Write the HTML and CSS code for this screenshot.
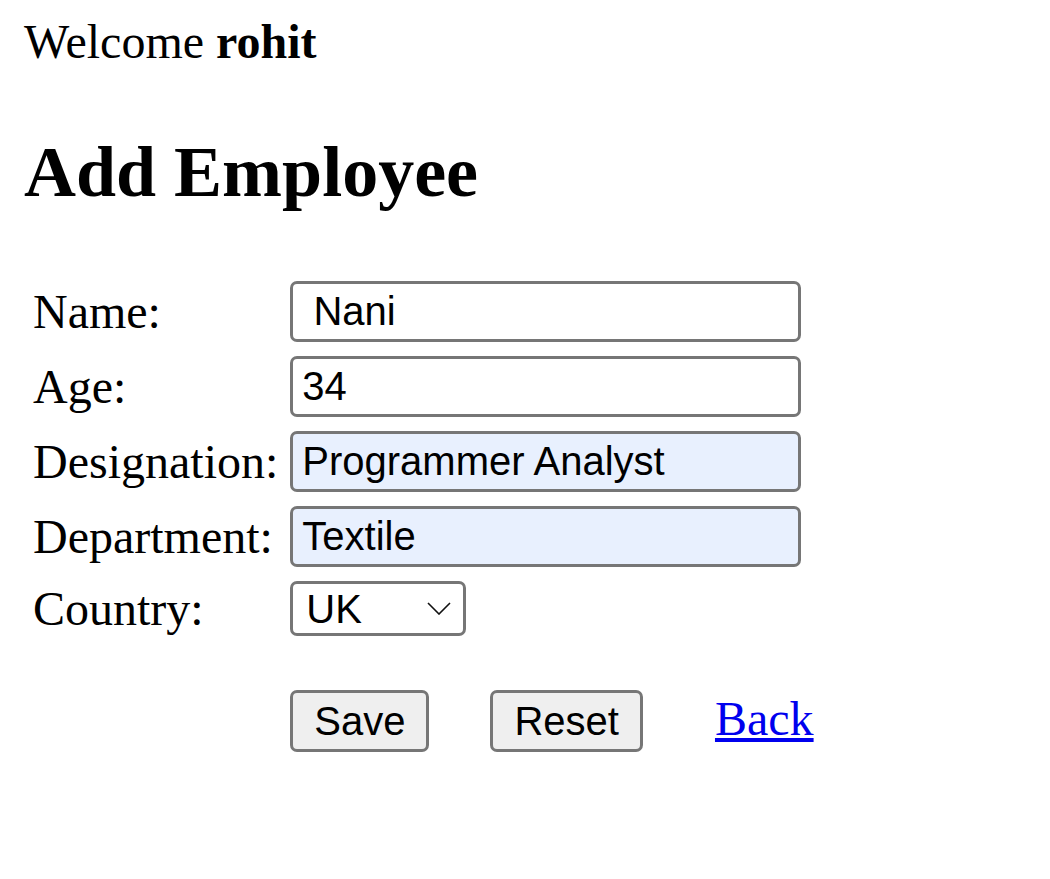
FILE: index.html
```html
<!DOCTYPE html>
<html>
<head>
<meta charset="utf-8">
<title>Add Employee</title>
<link rel="stylesheet" href="styles.css">
</head>
<body>
<div class="welcome">Welcome <b>rohit</b></div>
<h2 class="title">Add Employee</h2>
<table class="form">
  <tr>
    <td class="label">Name:</td>
    <td class="field"><input class="text" type="text" value=" Nani"></td>
  </tr>
  <tr>
    <td class="label">Age:</td>
    <td class="field"><input class="text" type="text" value="34"></td>
  </tr>
  <tr>
    <td class="label">Designation:</td>
    <td class="field"><input class="text autofill" type="text" value="Programmer Analyst"></td>
  </tr>
  <tr>
    <td class="label">Department:</td>
    <td class="field"><input class="text autofill" type="text" value="Textile"></td>
  </tr>
  <tr>
    <td class="label">Country:</td>
    <td class="field">
      <span class="select-wrap">
        <select class="select">
          <option>UK</option>
          <option>India</option>
          <option>USA</option>
        </select>
        <svg class="chevron" width="24" height="13" viewBox="0 0 24 13" aria-hidden="true">
          <path d="M1 1 L12 12 L23 1" fill="none" stroke="#111" stroke-width="1.6"/>
        </svg>
      </span>
    </td>
  </tr>
  <tr>
    <td class="label"></td>
    <td class="field actions-cell">
      <div class="actions">
        <button class="btn" type="submit">Save</button>
        <button class="btn btn-reset" type="reset">Reset</button>
        <a class="back" href="#">Back</a>
      </div>
    </td>
  </tr>
</table>
</body>
</html>
```
FILE: styles.css
```css
html, body {
  background: #ffffff;
}
body {
  margin: 0;
  padding: 14px 24px 0;
  font-family: "Liberation Serif", "Times New Roman", serif;
  font-size: 48px;
  color: #000;
}
.welcome {
  line-height: normal;
}
.title {
  font-size: 72px;
  font-weight: bold;
  margin: 62px 0 57px;
  line-height: normal;
}
.form {
  border-spacing: 6px;
  border-collapse: separate;
}
.form td {
  padding: 4px 3px;
  vertical-align: middle;
}
.label {
  white-space: nowrap;
  line-height: normal;
}
.text {
  display: block;
  box-sizing: border-box;
  width: 511px;
  height: 61px;
  margin: 0;
  padding: 0 9px;
  border: 3px solid #767676;
  border-radius: 7px;
  background: #ffffff;
  font-family: "Liberation Sans", Arial, sans-serif;
  font-size: 40px;
  color: #000;
  outline: none;
}
.autofill {
  background: #e8f0fe;
}
.select-wrap {
  position: relative;
  display: block;
  width: 176px;
}
.select {
  display: block;
  -webkit-appearance: none;
  appearance: none;
  box-sizing: border-box;
  width: 176px;
  height: 55px;
  margin: 0;
  padding: 0 0 0 13px;
  border: 3px solid #767676;
  border-radius: 7px;
  background: #ffffff;
  font-family: "Liberation Sans", Arial, sans-serif;
  font-size: 40px;
  color: #000;
}
.chevron {
  position: absolute;
  left: 137px;
  top: 21px;
  pointer-events: none;
}
.actions-cell {
  padding-top: 44px !important;
}
.actions {
  display: flex;
  align-items: baseline;
}
.btn {
  box-sizing: border-box;
  height: 62px;
  margin: 0;
  padding: 0 21px;
  border: 3px solid #767676;
  border-radius: 7px;
  background: #efefef;
  font-family: "Liberation Sans", Arial, sans-serif;
  font-size: 40px;
  color: #000;
}
.btn-reset {
  margin-left: 61px;
}
.back {
  margin-left: 72px;
  color: #0000ee;
  text-decoration: underline;
  font-size: 48px;
  line-height: normal;
}
```
